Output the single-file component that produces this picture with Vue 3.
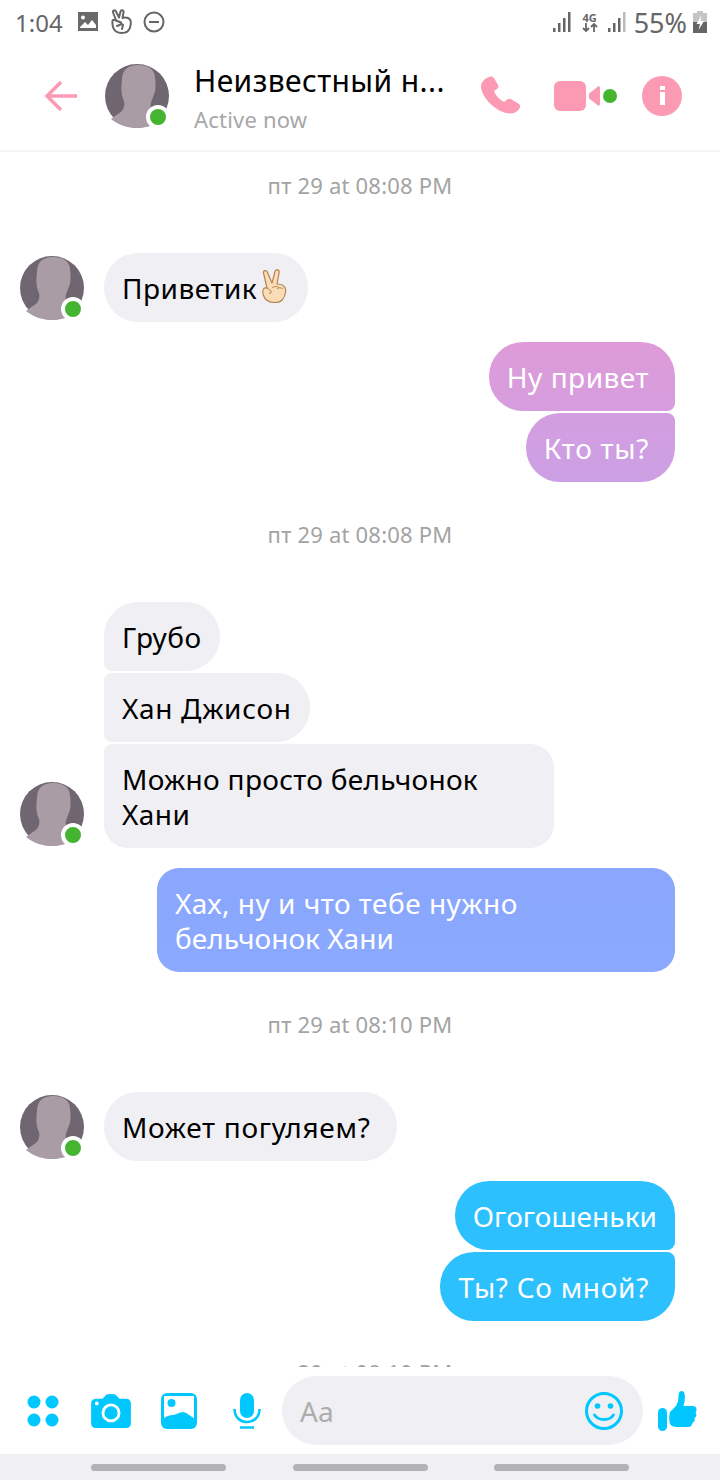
<script setup>
const bars = [1, 2, 3]
</script>

<template>
  <div class="screen">
    <div class="status-bar">
      <div class="status-left">
        <span class="clock">1:04</span>
        <svg class="st-icon" width="22" height="20" viewBox="0 0 22 20">
          <path fill="#6a6a6a" fill-rule="evenodd" d="M1 1h20v19H1z M6 4.500a2 2 0 1 0 0.010 0z M3 16l5-5 3 3 4-5 4 5v3H3z" transform="translate(0 -1)" />
        </svg>
        <svg class="st-icon" width="24" height="26" viewBox="0 0 24 26">
          <path fill="none" stroke="#666" stroke-width="2" stroke-linejoin="round" stroke-linecap="round" d="M7 11 4 3.500c-.5-2 2-3 3-1l3 6 1.500-6c.5-2 3.500-1.500 3 .8L13.500 9c3-.8 6-.3 7.500 1.500 1.200 2 .8 5.500 0 8-1 4-4.500 5.500-8 5.500-4 0-8-2-9-6-.5-2-.8-4-.5-6 .3-1.500 1.500-1.500 3.500-.5l5 2M8 17l5-2M13 20l1-4" />
        </svg>
        <svg class="st-icon" width="22" height="22" viewBox="0 0 22 22">
          <circle cx="11" cy="11" r="9.500" fill="none" stroke="#666" stroke-width="2" />
          <path stroke="#666" stroke-width="2" d="M6 11h10" />
        </svg>
      </div>
      <div class="status-right">
        <svg width="20" height="22" viewBox="0 0 20 22" fill="#666">
          <rect x="1" y="17" width="2.500" height="4" />
          <rect x="6" y="12" width="2.500" height="9" />
          <rect x="11" y="7" width="2.500" height="14" />
          <rect x="16" y="1" width="2.500" height="20" />
        </svg>
        <div class="net">
          <span>4G</span>
          <svg width="16" height="9" viewBox="0 0 16 9" fill="none" stroke="#666" stroke-width="1.800">
            <path d="M4 0v8M1 5l3 3 3-3M12 9V1M9 4l3-3 3 3" />
          </svg>
        </div>
        <svg width="20" height="22" viewBox="0 0 20 22" fill="#666">
          <rect x="1" y="17" width="2.500" height="4" />
          <rect x="6" y="12" width="2.500" height="9" />
          <rect x="11" y="7" width="2.500" height="14" />
          <rect x="16" y="1" width="2.500" height="20" fill="#bbb" />
        </svg>
        <span class="battery-pct">55%</span>
        <svg width="14" height="22" viewBox="0 0 14 22">
          <rect x="4" y="0" width="6" height="2" fill="#c4c4c4" />
          <rect x="0" y="2" width="14" height="9" fill="#c4c4c4" />
          <rect x="0" y="11" width="14" height="11" fill="#666" />
          <path fill="#fff" d="M8.500 4 3.500 13H7l-1.500 6L11 10H7.500z" />
        </svg>
      </div>
    </div>

    <header class="header">
      <svg class="back" width="36" height="32" viewBox="0 0 36 32" fill="none" stroke="#fc9ab3" stroke-width="3.500">
        <path d="M34 16H4M18 2 4 16l14 14" />
      </svg>
      <div class="avatar avatar-head">
        <svg viewBox="0 0 64 64" width="64" height="64">
          <circle cx="32" cy="32" r="32" fill="#6f6671" />
          <path fill="#a99ca4" d="M33 1c10 0 17 4 17 13 1 7 1 13-2 19-2 5-3 8-2 11 2 4 5 6 9 8l4 3c-7 5-16 9-27 9-11 0-20-4-26-9 3-3 8-5 11-8 2-3 3-6 2-10-3-6-3-13-2-21C17 6 23 1 33 1z" />
        </svg>
        <span class="online"></span>
      </div>
      <div class="title">
        <div class="name">Неизвестный н...</div>
        <div class="active">Active now</div>
      </div>
      <svg class="call" width="42" height="40" viewBox="0 0 42 40" fill="#fc9ab3">
        <path d="M9 1c2-1 4-.5 5 1l4 7c.8 1.500.3 3-1 4l-3 2c2 5 5.500 8.500 10 11l3-2.500c1.300-1 3-1 4.200-.2l7.500 4.500c1.500 1 2 3 .8 4.700-2 3-5.500 5-9 5C17 37.500 2 22 1 11c-.2-4 3-8.500 8-10z" />
      </svg>
      <div class="video">
        <span class="video-body"></span>
        <svg width="11" height="20" viewBox="0 0 11 20" fill="#fc9ab3">
          <path d="M9 .5c1.500-.5 2 .5 2 1.500v16c0 1-.5 2-2 1.500L2 14c-1-.5-2-1-2-2V8c0-1 1-1.500 2-2z" />
        </svg>
        <span class="video-dot"></span>
      </div>
      <div class="info">
        <span class="info-dot"></span>
        <span class="info-bar"></span>
      </div>
    </header>

    <main class="chat">
      <div class="stamp stamp-first">пт 29 at 08:08 PM</div>

      <div class="row row-in">
        <div class="avatar avatar-msg">
          <svg viewBox="0 0 64 64" width="64" height="64">
            <circle cx="32" cy="32" r="32" fill="#6f6671" />
            <path fill="#a99ca4" d="M33 1c10 0 17 4 17 13 1 7 1 13-2 19-2 5-3 8-2 11 2 4 5 6 9 8l4 3c-7 5-16 9-27 9-11 0-20-4-26-9 3-3 8-5 11-8 2-3 3-6 2-10-3-6-3-13-2-21C17 6 23 1 33 1z" />
          </svg>
          <span class="online"></span>
        </div>
        <div class="bubble in">
          Приветик<svg class="hand" width="30" height="35" viewBox="0 0 30 35">
            <path fill="#fbdcb8" stroke="#b5854f" stroke-width="1.200" stroke-linejoin="round" d="M9 19 5.500 4c-.5-2.500 3-3.500 3.800-1L14 14l3-11.500c.6-2.500 4.600-2 4.200.6L19 15c3 0 6 1 7 2.500 1.500 1 2 3 1.500 5.500-.5 6-4 10.500-10.500 10.500-5 0-10-2-11.500-7-1-3-1-5 0-6.500 1-1.500 1.500-1 3.500-1z" />
            <path fill="none" stroke="#b5854f" stroke-width="1" d="M9 19l4 3c1 1 0 3-2 2M14 19c2-2 6-2 7 0M19 20c2-2 5-1 6 0" />
          </svg>
        </div>
      </div>

      <div class="group-out group-first">
        <div class="bubble out out-top pink-a trail">Ну привет</div>
        <div class="bubble out out-bottom pink-b trail wide">Кто ты?</div>
      </div>

      <div class="stamp stamp-second">пт 29 at 08:08 PM</div>

      <div class="row row-in row-group">
        <div class="avatar avatar-msg">
          <svg viewBox="0 0 64 64" width="64" height="64">
            <circle cx="32" cy="32" r="32" fill="#6f6671" />
            <path fill="#a99ca4" d="M33 1c10 0 17 4 17 13 1 7 1 13-2 19-2 5-3 8-2 11 2 4 5 6 9 8l4 3c-7 5-16 9-27 9-11 0-20-4-26-9 3-3 8-5 11-8 2-3 3-6 2-10-3-6-3-13-2-21C17 6 23 1 33 1z" />
          </svg>
          <span class="online"></span>
        </div>
        <div class="stack">
          <div class="bubble in in-top">Грубо</div>
          <div class="bubble in in-mid wide">Хан Джисон</div>
          <div class="bubble in in-last wrap"><span class="snug">Можно просто бельчонок</span><br />Хани</div>
        </div>
      </div>

      <div class="group-out group-single">
        <div class="bubble out wrap blue">Хах, ну и что тебе нужно<br /><span class="tight">бельчонок Хани</span></div>
      </div>

      <div class="stamp stamp-third">пт 29 at 08:10 PM</div>

      <div class="row row-in">
        <div class="avatar avatar-msg">
          <svg viewBox="0 0 64 64" width="64" height="64">
            <circle cx="32" cy="32" r="32" fill="#6f6671" />
            <path fill="#a99ca4" d="M33 1c10 0 17 4 17 13 1 7 1 13-2 19-2 5-3 8-2 11 2 4 5 6 9 8l4 3c-7 5-16 9-27 9-11 0-20-4-26-9 3-3 8-5 11-8 2-3 3-6 2-10-3-6-3-13-2-21C17 6 23 1 33 1z" />
          </svg>
          <span class="online"></span>
        </div>
        <div class="bubble in trail wide">Может погуляем?</div>
      </div>

      <div class="group-out group-first">
        <div class="bubble out out-top cyan tight">Огогошеньки</div>
        <div class="bubble out out-bottom cyan trail wide">Ты? Со мной?</div>
      </div>

      <div class="stamp stamp-clipped">пт 29 at 08:10 PM</div>
    </main>

    <footer class="composer">
      <svg width="36" height="36" viewBox="0 0 36 36" fill="#00c8ff">
        <circle cx="9" cy="9" r="6.500" />
        <circle cx="27" cy="9" r="6.500" />
        <circle cx="9" cy="27" r="6.500" />
        <circle cx="27" cy="27" r="6.500" />
      </svg>
      <svg class="camera" width="40" height="36" viewBox="0 0 42 38">
        <path fill="#00c8ff" d="M6 6h6l3-3c1-1 2-2 4-2h4c2 0 3 1 4 2l3 3h7c3 0 5 2 5 5v21c0 3-2 5-5 5H5c-3 0-5-2-5-5V11c0-3 2-5 6-5z" />
        <circle cx="21" cy="21" r="8.500" fill="none" stroke="#fff" stroke-width="3" />
        <circle cx="6" cy="11" r="2" fill="#fff" />
      </svg>
      <svg class="picture" width="36" height="36" viewBox="0 0 36 36">
        <rect width="36" height="36" rx="6" fill="#00c8ff" />
        <path fill="#fff" d="M3 3h30v22c-4-2-8-6-11-6-4 0-7 3-10 3-3 0-6 1-9 3z" />
        <circle cx="10.500" cy="10" r="4" fill="#00c8ff" />
      </svg>
      <svg class="mic" width="28" height="36" viewBox="0 0 28 36">
        <rect x="7" y="0" width="14" height="25" rx="7" fill="#00c8ff" />
        <path fill="none" stroke="#00c8ff" stroke-width="2.500" d="M1.500 16c0 8 5.500 13 12.500 13s12.500-5 12.500-13" />
        <path stroke="#00c8ff" stroke-width="2.500" d="M7 34.500h14" />
      </svg>
      <div class="input">
        <span class="placeholder">Aa</span>
        <svg width="40" height="40" viewBox="0 0 40 40" fill="none" stroke="#00c8ff">
          <circle cx="20" cy="20" r="17.500" stroke-width="3" />
          <circle cx="13.500" cy="15" r="2.800" fill="#00c8ff" stroke="none" />
          <circle cx="26.500" cy="15" r="2.800" fill="#00c8ff" stroke="none" />
          <path stroke-width="2.800" stroke-linecap="round" d="M10.500 24c4 6 15 6 19 0" />
        </svg>
      </div>
      <svg class="like" width="42" height="42" viewBox="0 0 42 42" fill="#00c8ff">
        <rect x="1" y="18" width="9" height="23" rx="4.500" />
        <path d="M13 22c3-3 7-6 8-11 .4-3 .5-6 1-8 .5-2.500 4.500-3 5.500.5 1 4 0 9-1 12.500h9c3 0 4 1.500 4 3.500 0 1.500-.5 2.500-1 3 1.500 2 1 4.500-1 5.500.7 2 0 4-2 5-.5 2.500-2 4-4 4H20c-3 0-6-1-7-3-1-3-1-9 0-12.500z" />
      </svg>
    </footer>

    <nav class="nav-bar">
      <span v-for="bar in bars" :key="bar" class="nav-pill"></span>
    </nav>
  </div>
</template>

<style>
html,
body {
  margin: 0;
  background: #fff;
}
</style>

<style scoped>
.screen {
  width: 720px;
  height: 1480px;
  display: flex;
  flex-direction: column;
  background: #fff;
  overflow: hidden;
  font-family: "Noto Sans", "Open Sans", sans-serif;
}

.status-bar {
  height: 44px;
  flex: none;
  box-sizing: border-box;
  padding: 0 13px 0 15px;
  display: flex;
  justify-content: space-between;
  align-items: center;
  color: #666;
}

.status-left,
.status-right {
  display: flex;
  align-items: center;
}

.clock {
  font-size: 24px;
  margin-right: 14px;
}

.st-icon {
  margin-right: 10px;
}

.status-right svg {
  flex: none;
}

.net {
  display: flex;
  flex-direction: column;
  align-items: center;
  width: 18px;
  margin: 0 8px 0 9px;
  font-size: 11px;
  font-weight: 700;
  line-height: 11px;
}

.battery-pct {
  font-size: 27px;
  margin: 0 6px 0 7px;
}

.header {
  height: 108px;
  flex: none;
  box-sizing: border-box;
  display: flex;
  align-items: center;
  padding: 0 0 2px 43px;
  border-bottom: 2px solid #f3f2f5;
}

.back {
  flex: none;
}

.avatar {
  position: relative;
  width: 64px;
  height: 64px;
  flex: none;
}

.avatar svg {
  display: block;
}

.avatar-head {
  margin-left: 26px;
}

.online {
  position: absolute;
  right: -1px;
  bottom: -1px;
  width: 16px;
  height: 16px;
  border: 4px solid #fff;
  border-radius: 50%;
  background: #45b430;
}

.title {
  width: 286px;
  margin-left: 25px;
  margin-top: 3px;
  flex: none;
}

.name {
  font-size: 30px;
  line-height: 36px;
  color: #000;
  letter-spacing: 0.4px;
}

.active {
  font-size: 22px;
  line-height: 28px;
  margin-top: 6px;
  color: #a8a8a8;
  letter-spacing: 0.2px;
}

.call {
  flex: none;
}

.video {
  display: flex;
  align-items: center;
  margin-left: 32px;
  flex: none;
}

.video-body {
  width: 32px;
  height: 30px;
  border-radius: 6px;
  background: #fc9ab3;
}

.video svg {
  margin-left: 3px;
}

.video-dot {
  width: 14px;
  height: 14px;
  margin-left: 3px;
  border-radius: 50%;
  background: #45b430;
}

.info {
  width: 40px;
  height: 40px;
  margin-left: 25px;
  flex: none;
  border-radius: 50%;
  background: #fc9ab3;
  display: flex;
  flex-direction: column;
  align-items: center;
  padding-top: 10px;
  box-sizing: border-box;
}

.info-dot {
  width: 5px;
  height: 4px;
  background: #fff;
}

.info-bar {
  width: 5px;
  height: 13px;
  margin-top: 2px;
  background: #fff;
}

.chat {
  flex: 1;
  min-height: 0;
  overflow: hidden;
  display: flex;
  flex-direction: column;
}

.stamp {
  flex: none;
  text-align: center;
  font-size: 22px;
  line-height: 28px;
  color: #a3a3a3;
  letter-spacing: 0.2px;
}

.stamp-first {
  margin-top: 19px;
  margin-bottom: 54px;
}

.stamp-second {
  margin-top: 38px;
  margin-bottom: 54px;
}

.stamp-third {
  margin-top: 38px;
  margin-bottom: 54px;
}

.stamp-clipped {
  margin-top: 37px;
}

.row {
  flex: none;
  display: flex;
  align-items: flex-end;
  padding-left: 20px;
}

.row .avatar-msg {
  margin-right: 20px;
  margin-bottom: 2px;
}

.stack {
  display: flex;
  flex-direction: column;
  align-items: flex-start;
  gap: 2px;
}

.bubble {
  box-sizing: border-box;
  height: 69px;
  padding: 1px 18px 0;
  display: flex;
  align-items: center;
  font-size: 28px;
  line-height: 35px;
  letter-spacing: 0.5px;
  white-space: nowrap;
  border-radius: 34px;
}

.bubble.trail {
  padding-right: 26px;
}

.bubble.wide {
  letter-spacing: 0.7px;
}

.bubble.tight,
.tight {
  letter-spacing: 0.05px;
}

.snug {
  letter-spacing: 0.3px;
}

.bubble.wrap {
  display: block;
  height: 104px;
  padding: 18px 18px 0;
  border-radius: 22px;
}

.in {
  background: #f0eff3;
  color: #000;
}

.in-top {
  border-radius: 34px 34px 34px 8px;
}

.in-mid {
  border-radius: 8px 34px 34px 8px;
}

.bubble.in-last {
  width: 450px;
  border-radius: 8px 24px 24px 24px;
}

.hand {
  margin-left: 1px;
  margin-right: 2px;
  margin-top: -3px;
}

.group-out {
  flex: none;
  display: flex;
  flex-direction: column;
  align-items: flex-end;
  padding-right: 45px;
  gap: 2px;
}

.group-first {
  margin-top: 20px;
}

.group-single {
  margin-top: 20px;
}

.out {
  color: #fff;
}

.out-top {
  border-radius: 34px 34px 8px 34px;
}

.out-bottom {
  border-radius: 34px 8px 34px 34px;
}

.pink-a {
  background: linear-gradient(180deg, #de9bd8, #d69dde);
}

.pink-b {
  background: linear-gradient(180deg, #d39ee0, #cc9fe4);
}

.bubble.blue {
  width: 518px;
  background: linear-gradient(180deg, #8aa6fd, #8aa9ff);
}

.cyan {
  background: #2dc0ff;
}

.composer {
  position: relative;
  height: 87px;
  flex: none;
  box-sizing: border-box;
  padding: 0 0 0 25px;
  display: flex;
  align-items: center;
  background: #fff;
}

.composer svg {
  flex: none;
}

.camera {
  margin-left: 30px;
}

.picture {
  margin-left: 30px;
}

.mic {
  margin-left: 36px;
}

.input {
  width: 361px;
  height: 69px;
  margin-left: 21px;
  flex: none;
  box-sizing: border-box;
  padding: 0 19px 0 18px;
  display: flex;
  align-items: center;
  justify-content: space-between;
  background: #f0eff3;
  border-radius: 35px;
}

.placeholder {
  font-size: 28px;
  color: #adadad;
}

.like {
  margin-left: 14px;
}

.nav-bar {
  height: 26px;
  flex: none;
  display: flex;
  align-items: center;
  justify-content: space-between;
  box-sizing: border-box;
  padding: 0 91px;
  background: #f0eff2;
}

.nav-pill {
  width: 135px;
  height: 7px;
  border-radius: 4px;
  background: #b3b2b5;
}
</style>
